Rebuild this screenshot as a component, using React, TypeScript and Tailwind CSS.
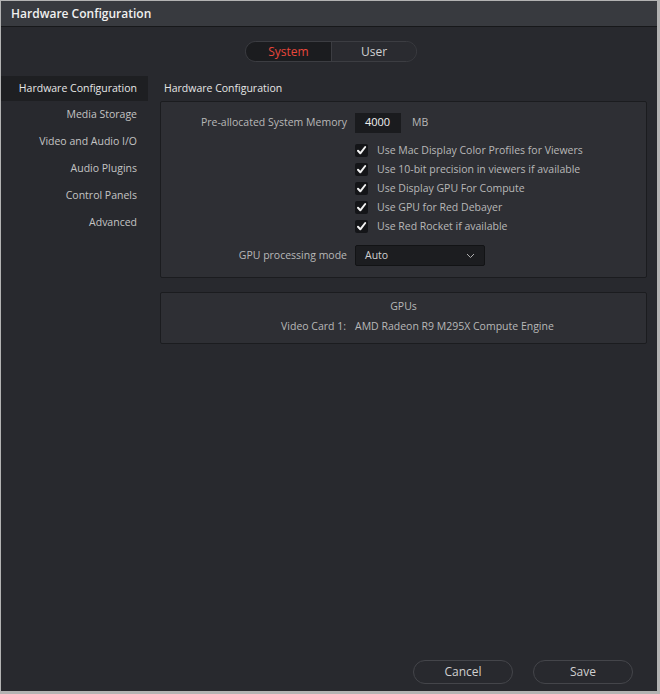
import React from "react";

const font = { fontFamily: '"Open Sans", "Noto Sans", sans-serif' };

function Check() {
  return (
    <div className="w-[13px] h-[13px] bg-[#141518] rounded-[2px] flex items-center justify-center">
      <svg width="11" height="11" viewBox="0 0 11 11">
        <path d="M2 5.8 L4.3 8.3 L9.2 2" stroke="#f2f2f2" strokeWidth="2" fill="none" strokeLinecap="round" strokeLinejoin="round" />
      </svg>
    </div>
  );
}

const checks = [
  "Use Mac Display Color Profiles for Viewers",
  "Use 10-bit precision in viewers if available",
  "Use Display GPU For Compute",
  "Use GPU for Red Debayer",
  "Use Red Rocket if available",
];

const side = ["Media Storage", "Video and Audio I/O", "Audio Plugins", "Control Panels", "Advanced"];

export default function App() {
  return (
    <div className="w-[660px] h-[694px] bg-[#b3b3b3] pt-[1px] pl-[1px]" style={font}>
      <div className="w-[656px] h-[690px] bg-[#28292e] flex flex-col">
        <div className="h-[26px] bg-[#383a3f] border-b border-[#17181a] flex items-center pl-[10px] shrink-0">
          <span className="text-[12px] font-semibold text-[#f0f0f0]">Hardware Configuration</span>
        </div>
        <div className="flex justify-center mt-[14px] ml-[4px]">
          <div className="flex h-[21px] w-[172px] rounded-full border border-[#3c3d42] overflow-hidden text-[12px]">
            <div className="w-[85px] bg-[#1b1c1f] flex items-center justify-center text-[#e8473b]">System</div>
            <div className="flex-1 bg-[#2a2b30] border-l border-[#3c3d42] flex items-center justify-center text-[#d0d0d0]">User</div>
          </div>
        </div>
        <div className="flex mt-[14px] flex-1">
          <div className="w-[147px] flex flex-col text-[10.5px] text-[#c4c4c4]">
            <div className="h-[25px] bg-[#1e1f22] flex items-center justify-end pr-[11px] text-[#e6e6e6]">Hardware Configuration</div>
            {side.map((s) => (
              <div key={s} className="h-[27px] flex items-center justify-end pr-[11px] first:mt-[1px]">{s}</div>
            ))}
          </div>
          <div className="flex-1 flex flex-col pl-[12px] pr-[10px]">
            <div className="h-[25px] flex items-center pl-[4px] text-[10.5px] text-[#e6e6e6]">Hardware Configuration</div>
            <div className="bg-[#2e2f34] border border-[#1b1c1f] rounded-[2px] h-[177px] flex flex-col text-[10.5px] text-[#b8b8b8]">
              <div className="flex items-center mt-[10px] h-[21px]">
                <div className="w-[194px] text-right pr-[8px]">Pre-allocated System Memory</div>
                <div className="w-[46px] h-[20px] bg-[#1a1b1e] flex items-center pl-[10px] text-[#f0f0f0] text-[11px]">4000</div>
                <div className="ml-[11px]">MB</div>
              </div>
              <div className="flex flex-col mt-[8px] pl-[194px]">
                {checks.map((c) => (
                  <div key={c} className="h-[19px] flex items-center">
                    <Check />
                    <span className="ml-[9px]">{c}</span>
                  </div>
                ))}
              </div>
              <div className="flex items-center mt-[9px]">
                <div className="w-[194px] text-right pr-[8px]">GPU processing mode</div>
                <div className="w-[130px] h-[21px] bg-[#1c1d20] border border-[#121315] rounded-[2px] flex items-center justify-between pl-[9px] pr-[9px] text-[#d0d0d0]">
                  <span>Auto</span>
                  <svg width="9" height="6" viewBox="0 0 9 6">
                    <path d="M1 1 L4.5 4.5 L8 1" stroke="#b0b0b0" strokeWidth="1" fill="none" />
                  </svg>
                </div>
              </div>
            </div>
            <div className="mt-[14px] bg-[#2e2f34] border border-[#1b1c1f] rounded-[2px] h-[52px] flex flex-col text-[10.5px] text-[#b8b8b8]">
              <div className="text-center mt-[6px] h-[16px]">GPUs</div>
              <div className="flex items-center mt-[4px]">
                <div className="w-[194px] text-right pr-[9px]">Video Card 1:</div>
                <div>AMD Radeon R9 M295X Compute Engine</div>
              </div>
            </div>
            <div className="flex-1" />
            <div className="flex justify-end gap-[20px] pr-[14px] mb-[7px] text-[12px] text-[#d0d0d0]">
              <div className="w-[100px] h-[24px] rounded-full border border-[#44454a] flex items-center justify-center">Cancel</div>
              <div className="w-[100px] h-[24px] rounded-full border border-[#44454a] flex items-center justify-center">Save</div>
            </div>
          </div>
        </div>
      </div>
    </div>
  );
}
